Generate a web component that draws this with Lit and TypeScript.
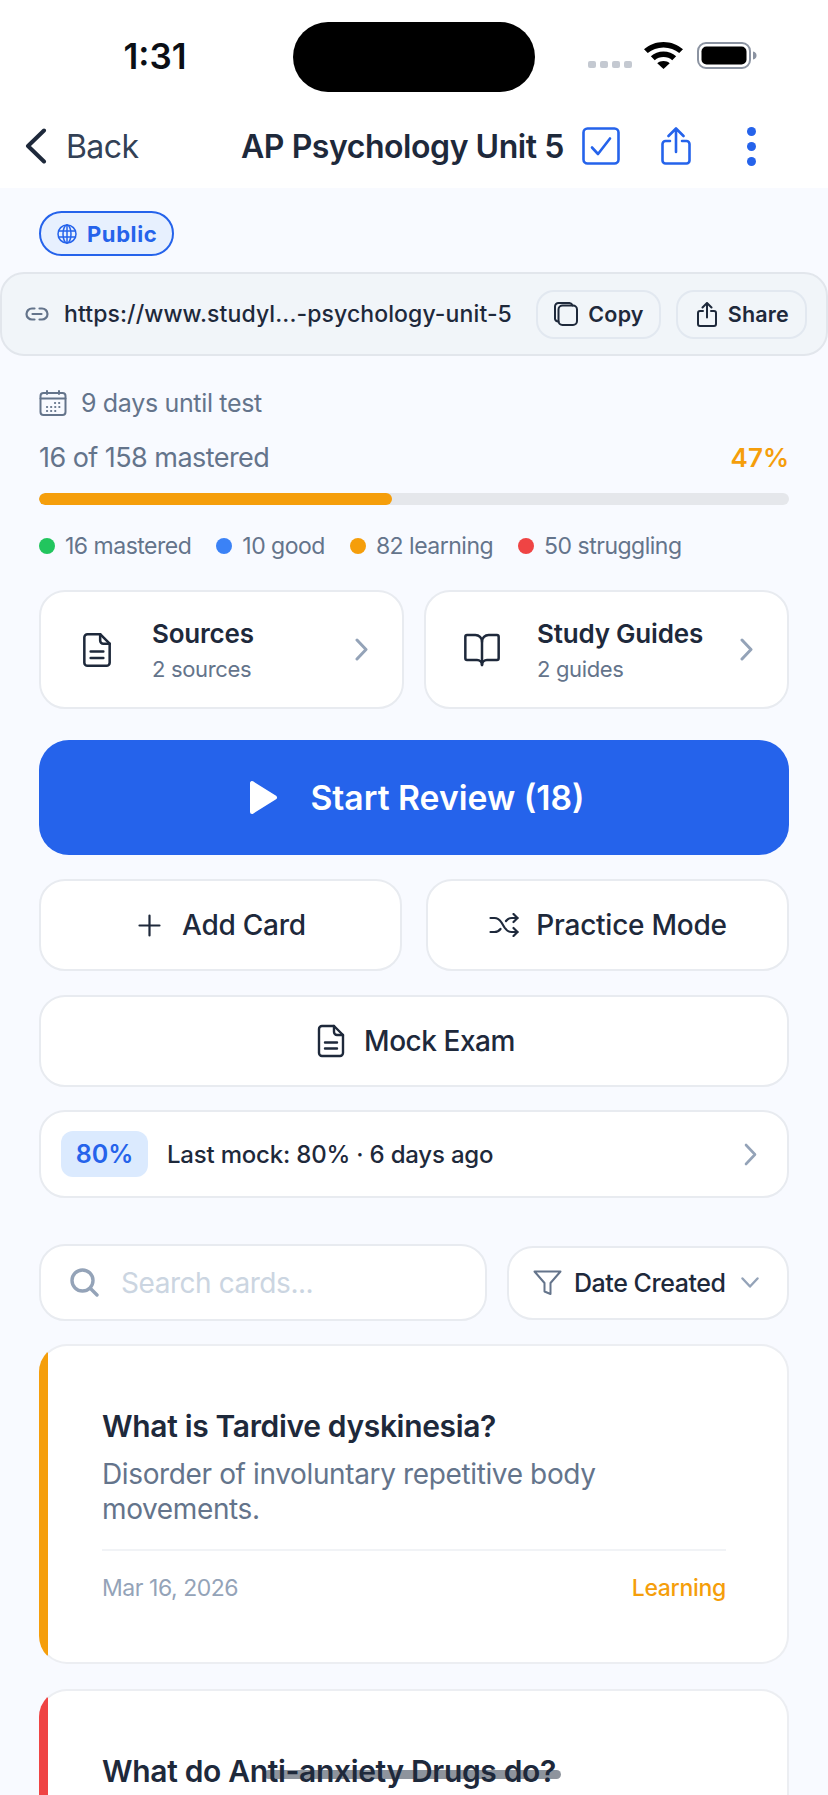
import { LitElement, css, html, svg } from "lit";
import { customElement } from "lit/decorators.js";

const docIcon = svg`<path d="M14 2H6a2 2 0 0 0-2 2v16a2 2 0 0 0 2 2h12a2 2 0 0 0 2-2V8z" /><path d="M14 2v4a2 2 0 0 0 2 2h4" /><path d="M8 13h8M8 17h8" />`;
const chevronRight = svg`<path d="M2 2l9 9.5L2 21" />`;

const legend = [
  { color: "#22c55e", label: "16 mastered" },
  { color: "#3b82f6", label: "10 good" },
  { color: "#f59e0b", label: "82 learning" },
  { color: "#ef4444", label: "50 struggling" },
];

@customElement("app-root")
export class AppRoot extends LitElement {
  static styles = css`
    :host {
      display: block;
      position: relative;
      width: 828px;
      height: 1795px;
      overflow: hidden;
      background: #f8faff;
      color: #1e293b;
      font-family: Inter, "Liberation Sans", sans-serif;
    }
    svg {
      display: block;
      flex: none;
      fill: none;
      stroke: currentColor;
      stroke-linecap: round;
      stroke-linejoin: round;
    }
    .top {
      background: #fff;
      height: 188px;
    }
    .status {
      display: flex;
      height: 104px;
      box-sizing: border-box;
      padding-top: 22px;
    }
    .status-left {
      width: 293px;
      height: 68px;
      display: flex;
      align-items: center;
      justify-content: center;
      padding-left: 17px;
      box-sizing: border-box;
      font-size: 35px;
      font-weight: 600;
      color: #0b0f16;
    }
    .island {
      width: 242px;
      height: 70px;
      border-radius: 35px;
      background: #000;
    }
    .status-right {
      display: flex;
      align-items: flex-start;
      margin-left: 53px;
      padding-top: 20px;
    }
    .signal {
      display: flex;
      gap: 4px;
      margin-top: 19px;
      margin-right: 12px;
    }
    .signal i {
      width: 8px;
      height: 7px;
      border-radius: 2px;
      background: #c4c9d1;
    }
    .battery {
      margin-left: 14px;
    }
    .nav {
      display: flex;
      align-items: center;
      height: 84px;
      padding-left: 25px;
    }
    .back {
      display: flex;
      align-items: center;
      gap: 19px;
      width: 216px;
      font-size: 32px;
      letter-spacing: -0.6px;
      color: #334155;
    }
    .title {
      font-size: 32px;
      font-weight: 600;
      letter-spacing: -0.45px;
      width: 341px;
      white-space: nowrap;
    }
    .nav-actions {
      display: flex;
      align-items: center;
      color: #2563eb;
    }
    .nav-share {
      margin-left: 41px;
    }
    .nav-dots {
      margin-left: 56px;
      display: flex;
      flex-direction: column;
      gap: 6px;
    }
    .nav-dots i {
      width: 9px;
      height: 9px;
      border-radius: 50%;
      background: #2563eb;
    }
    .content {
      padding: 23px 39px 0;
    }
    .pill {
      display: inline-flex;
      align-items: center;
      gap: 10px;
      height: 45px;
      box-sizing: border-box;
      padding: 0 15px 0 16px;
      border: 2px solid #2563eb;
      border-radius: 23px;
      background: #e7f0fe;
      color: #2563eb;
      font-size: 22px;
      font-weight: 700;
      letter-spacing: 0.6px;
      vertical-align: top;
    }
    .url-bar {
      display: flex;
      align-items: center;
      margin: 16px -39px 0;
      height: 84px;
      box-sizing: border-box;
      padding: 0 19px 0 23px;
      border: 2px solid #e2e6ec;
      border-radius: 24px;
      background: #f1f5f9;
    }
    .url-icon {
      color: #64748b;
    }
    .url-text {
      flex: 1;
      margin-left: 15px;
      font-size: 23px;
      font-weight: 500;
      letter-spacing: 0.1px;
      white-space: nowrap;
    }
    .mini-btn {
      display: flex;
      align-items: center;
      gap: 10px;
      height: 49px;
      box-sizing: border-box;
      padding: 0 15px 0 16px;
      border: 2px solid #e2e8f0;
      border-radius: 18px;
      font-size: 21.5px;
      font-weight: 600;
      letter-spacing: 0.2px;
    }
    .mini-btn + .mini-btn {
      margin-left: 15px;
      padding: 0 16px 0 19px;
      gap: 11px;
    }
    .countdown {
      display: flex;
      align-items: center;
      gap: 14px;
      height: 30px;
      margin-top: 32px;
      font-size: 25px;
      letter-spacing: -0.33px;
      color: #64748b;
    }
    .progress-head {
      display: flex;
      justify-content: space-between;
      align-items: center;
      height: 36px;
      margin-top: 21px;
      font-size: 27px;
      letter-spacing: -0.55px;
      color: #64748b;
    }
    .percent {
      color: #f59e0b;
      font-weight: 600;
      font-size: 26px;
      letter-spacing: 0;
    }
    .track {
      height: 12px;
      margin-top: 18px;
      border-radius: 6px;
      background: #e5e7eb;
      overflow: hidden;
    }
    .fill {
      height: 100%;
      border-radius: 6px;
      background: #f59e0b;
    }
    .legend {
      display: flex;
      gap: 25px;
      align-items: center;
      height: 30px;
      margin-top: 26px;
      font-size: 23px;
      letter-spacing: -0.5px;
      color: #64748b;
    }
    .legend-item {
      display: flex;
      align-items: center;
      gap: 10px;
    }
    .dot {
      width: 16px;
      height: 16px;
      border-radius: 50%;
    }
    .box {
      box-sizing: border-box;
      border: 2px solid #e8ebf0;
      border-radius: 26px;
      background: #fff;
    }
    .links {
      display: grid;
      grid-template-columns: 1fr 1fr;
      gap: 20px;
      margin-top: 29px;
    }
    .link-card {
      display: flex;
      align-items: center;
      height: 119px;
      padding: 0 34px 0 37px;
    }
    .link-card.guides {
      padding-left: 36px;
    }
    .link-text {
      flex: 1;
      margin-left: 36px;
    }
    .guides .link-text {
      margin-left: 35px;
    }
    .link-title {
      font-size: 26px;
      font-weight: 600;
      letter-spacing: -0.2px;
      line-height: 36px;
      margin-top: 1px;
    }
    .link-sub {
      font-size: 22px;
      letter-spacing: -0.35px;
      line-height: 32px;
      margin-top: 1px;
      color: #64748b;
    }
    .chev {
      color: #94a3b8;
    }
    .start {
      display: flex;
      align-items: center;
      justify-content: center;
      gap: 32px;
      height: 115px;
      margin-top: 31px;
      padding-left: 6px;
      border-radius: 30px;
      background: #2563eb;
      color: #fff;
      font-size: 33.7px;
      font-weight: 600;
    }
    .actions {
      display: grid;
      grid-template-columns: 1fr 1fr;
      gap: 24px;
      margin-top: 24px;
    }
    .action {
      display: flex;
      align-items: center;
      justify-content: center;
      gap: 21px;
      height: 92px;
      padding-left: 3px;
      font-size: 28px;
      font-weight: 500;
      letter-spacing: -0.25px;
    }
    .action.practice {
      gap: 17px;
      padding-left: 1px;
    }
    .mock {
      gap: 15px;
      margin-top: 24px;
      padding-left: 0;
      letter-spacing: -0.45px;
    }
    .last-mock {
      display: flex;
      align-items: center;
      height: 88px;
      margin-top: 23px;
      padding: 0 30px 0 20px;
      font-size: 24px;
      letter-spacing: -0.2px;
      font-weight: 500;
    }
    .last-score {
      display: flex;
      align-items: center;
      justify-content: center;
      width: 87px;
      height: 46px;
      border-radius: 12px;
      background: #dbeafe;
      color: #2563eb;
      font-size: 25px;
      letter-spacing: 0;
      font-weight: 600;
    }
    .last-text {
      flex: 1;
      margin-left: 19px;
    }
    .filters {
      display: flex;
      align-items: center;
      gap: 20px;
      margin-top: 46px;
    }
    .search {
      display: flex;
      align-items: center;
      gap: 22px;
      width: 448px;
      height: 77px;
      box-sizing: border-box;
      padding-left: 29px;
      font-size: 28px;
      letter-spacing: -0.45px;
      color: #cbd5e1;
    }
    .search svg {
      color: #94a3b8;
    }
    .sort {
      display: flex;
      align-items: center;
      flex: 1;
      height: 74px;
      box-sizing: border-box;
      padding: 0 28px 0 24px;
      font-size: 25px;
      letter-spacing: -0.45px;
      font-weight: 500;
    }
    .sort .sort-label {
      flex: 1;
      margin-left: 12px;
    }
    .sort svg {
      color: #64748b;
    }
    .sort svg.sort-chev {
      color: #94a3b8;
    }
    .card {
      --accent: #f59e0b;
      box-sizing: border-box;
      height: 320px;
      margin-top: 25px;
      padding: 60px 61px 0 61px;
      border: 2px solid #eceef2;
      border-left-color: transparent;
      border-radius: 28px;
      background: linear-gradient(90deg, var(--accent) 9px, #fff 9px) border-box;
    }
    .filters + .card {
      margin-top: 23px;
    }
    .card.red {
      --accent: #ef4444;
    }
    .card-title {
      font-size: 30px;
      font-weight: 600;
      letter-spacing: -0.34px;
      line-height: 40px;
    }
    .card-text {
      margin-top: 11px;
      font-size: 28px;
      letter-spacing: -0.37px;
      line-height: 35px;
      color: #64748b;
    }
    .card-foot {
      display: flex;
      justify-content: space-between;
      align-items: center;
      margin-top: 22px;
      padding-top: 19px;
      border-top: 2px solid #f1f3f6;
      font-size: 23px;
      letter-spacing: -0.45px;
      line-height: 36px;
      color: #94a3b8;
    }
    .card-level {
      color: #f59e0b;
      font-weight: 500;
      letter-spacing: -0.3px;
    }
    .home {
      position: absolute;
      left: 264px;
      top: 1770px;
      width: 297px;
      height: 9px;
      border-radius: 5px;
      background: rgba(30, 41, 59, 0.5);
    }
  `;

  render() {
    return html`
      <div class="top">
        <div class="status">
          <div class="status-left">1:31</div>
          <div class="island"></div>
          <div class="status-right">
            <div class="signal"><i></i><i></i><i></i><i></i></div>
            <svg width="39" height="27" viewBox="0 0 37 27" preserveAspectRatio="none" style="stroke:none">
              <path fill="#000" d="M18.5 0C11.4 0 5 2.8 0 7.2l3.6 3.9C7.6 7.6 12.8 5.4 18.5 5.4s10.900 2.200 14.900 5.700L37 7.200C32 2.800 25.600 0 18.500 0z" />
              <path fill="#000" d="M18.500 9.600c-4.600 0-8.800 1.800-12 4.700l3.700 3.900c2.200-2 5.100-3.200 8.300-3.200s6.100 1.200 8.300 3.200l3.700-3.900c-3.200-2.900-7.400-4.700-12-4.700z" />
              <path fill="#000" d="M18.500 19c-2.300 0-4.400.9-5.900 2.300l5.900 5.700 5.900-5.700c-1.500-1.400-3.600-2.300-5.900-2.300z" />
            </svg>
            <svg class="battery" width="60" height="27" viewBox="0 0 60 27" style="stroke:none">
              <rect x="1" y="1" width="52" height="25" rx="8" fill="none" stroke="#8b93a1" stroke-width="2" />
              <rect x="4.500" y="4.500" width="45" height="18" rx="5" fill="#000" />
              <path d="M56 9.500c2.500.5 3.500 2 3.500 4s-1 3.500-3.500 4z" fill="#8b93a1" />
            </svg>
          </div>
        </div>
        <div class="nav">
          <div class="back">
            <svg width="22" height="36" viewBox="0 0 22 36" stroke-width="4" style="color:#1e293b"><path d="M19 2.500L3 18l16 15.500" /></svg>
            Back
          </div>
          <div class="title">AP Psychology Unit 5</div>
          <div class="nav-actions">
            <svg width="38" height="38" viewBox="0 0 38 38" stroke-width="2.600">
              <rect x="1.500" y="1.500" width="35" height="35" rx="4" />
              <path d="M10 20.500l6 6.500 12-15.500" />
            </svg>
            <svg class="nav-share" width="30" height="38" viewBox="0 0 30 38" stroke-width="2.600">
              <path d="M15 25V2M7.500 9L15 1.500 22.500 9" />
              <path d="M9 14H4.500A3 3 0 0 0 1.500 17v16.500a3 3 0 0 0 3 3h21a3 3 0 0 0 3-3V17a3 3 0 0 0-3-3H21" />
            </svg>
            <div class="nav-dots"><i></i><i></i><i></i></div>
          </div>
        </div>
      </div>

      <div class="content">
        <div class="pill">
          <svg width="20" height="20" viewBox="0 0 20 20" stroke-width="1.500">
            <circle cx="10" cy="10" r="9" />
            <ellipse cx="10" cy="10" rx="4" ry="9" />
            <path d="M1.500 7h17M1.500 13h17M10 1v18" />
          </svg>
          Public
        </div>

        <div class="url-bar">
          <svg class="url-icon" width="24" height="14" viewBox="0 0 24 14" stroke-width="2.200">
            <path d="M9.500 1.500H7a5.500 5.500 0 0 0 0 11h2.500M14.500 1.500H17a5.500 5.500 0 0 1 0 11h-2.500M7.500 7h9" />
          </svg>
          <div class="url-text">https://www.studyl...-psychology-unit-5</div>
          <div class="mini-btn">
            <svg width="24" height="24" viewBox="0 0 24 24" stroke-width="2">
              <rect x="4.500" y="3.500" width="18.500" height="19.500" rx="4" />
              <path d="M4.500 19.500A3.500 3.500 0 0 1 1 17V4.500A3.500 3.500 0 0 1 4.500 1h11a3.500 3.500 0 0 1 3 2.500" />
            </svg>
            Copy
          </div>
          <div class="mini-btn">
            <svg width="20" height="25" viewBox="0 0 20 25" stroke-width="2">
              <path d="M10 15.500V1.500M5.500 5.500L10 1l4.500 4.500" />
              <path d="M6 9H3a2 2 0 0 0-2 2v11a2 2 0 0 0 2 2h14a2 2 0 0 0 2-2V11a2 2 0 0 0-2-2h-3" />
            </svg>
            Share
          </div>
        </div>

        <div class="countdown">
          <svg width="28" height="26" viewBox="0 0 28 26" stroke-width="2">
            <rect x="1.500" y="3" width="25" height="22" rx="3" />
            <path d="M1.500 8.500h25M8 1v3M20 1v3" />
            <path stroke-width="2.200" stroke-dasharray="0.100 4" d="M16 13h8M8 17h16M8 21h12" />
          </svg>
          9 days until test
        </div>

        <div class="progress-head">
          <span>16 of 158 mastered</span>
          <span class="percent">47%</span>
        </div>
        <div class="track"><div class="fill" style="width:47%"></div></div>

        <div class="legend">
          ${legend.map(
            (item) => html`
              <div class="legend-item">
                <span class="dot" style="background:${item.color}"></span>
                ${item.label}
              </div>
            `,
          )}
        </div>

        <div class="links">
          <div class="box link-card">
            <svg width="38" height="38" viewBox="0 0 24 24" stroke-width="1.600">${docIcon}</svg>
            <div class="link-text">
              <div class="link-title">Sources</div>
              <div class="link-sub">2 sources</div>
            </div>
            <svg class="chev" width="13" height="23" viewBox="0 0 13 23" stroke-width="3">${chevronRight}</svg>
          </div>
          <div class="box link-card guides">
            <svg width="40" height="40" viewBox="0 0 24 24" stroke-width="1.500">
              <path d="M12 7v14" />
              <path d="M3 18a1 1 0 0 1-1-1V4a1 1 0 0 1 1-1h5a4 4 0 0 1 4 4 4 4 0 0 1 4-4h5a1 1 0 0 1 1 1v13a1 1 0 0 1-1 1h-6a3 3 0 0 0-3 3 3 3 0 0 0-3-3z" />
            </svg>
            <div class="link-text">
              <div class="link-title">Study Guides</div>
              <div class="link-sub">2 guides</div>
            </div>
            <svg class="chev" width="13" height="23" viewBox="0 0 13 23" stroke-width="3">${chevronRight}</svg>
          </div>
        </div>

        <div class="start">
          <svg width="29" height="35" viewBox="0 0 29 35" stroke-width="4" style="fill:#fff">
            <path d="M3 3v29l23-14.500z" />
          </svg>
          Start Review (18)
        </div>

        <div class="actions">
          <div class="box action">
            <svg width="23" height="23" viewBox="0 0 23 23" stroke-width="2.200"><path d="M11.500 1.500v20M1.500 11.500h20" /></svg>
            Add Card
          </div>
          <div class="box action practice">
            <svg width="30" height="24" viewBox="0 0 30 24" stroke-width="2.200">
              <path d="M1.500 5h4c3 0 5 1.500 7 4.500l3 5c2 3 4 4.500 7 4.500h6" />
              <path d="M1.500 19h4c2.500 0 4.500-1 6-3M17 8c1.500-2 3.500-3 6-3h5.500" />
              <path d="M24.500 1l4 4-4 4M24.500 15l4 4-4 4" />
            </svg>
            Practice Mode
          </div>
        </div>

        <div class="box action mock">
          <svg width="36" height="36" viewBox="0 0 24 24" stroke-width="1.600">${docIcon}</svg>
          Mock Exam
        </div>

        <div class="box last-mock">
          <div class="last-score">80%</div>
          <div class="last-text">Last mock: 80% · 6 days ago</div>
          <svg class="chev" width="13" height="23" viewBox="0 0 13 23" stroke-width="2.600">${chevronRight}</svg>
        </div>

        <div class="filters">
          <div class="box search">
            <svg width="29" height="29" viewBox="0 0 29 29" stroke-width="3.400">
              <circle cx="12.500" cy="12.500" r="10.500" />
              <path d="M20.500 20.500l6.500 6.500" />
            </svg>
            Search cards...
          </div>
          <div class="box sort">
            <svg width="29" height="26" viewBox="0 0 29 26" stroke-width="2">
              <path d="M1.500 1.500h26L17.500 13v11l-6-2.500V13z" />
            </svg>
            <span class="sort-label">Date Created</span>
            <svg class="sort-chev" width="18" height="11" viewBox="0 0 18 11" stroke-width="2.400"><path d="M1.500 1.500L9 9.500l7.500-8" /></svg>
          </div>
        </div>

        <div class="card">
          <div class="card-title">What is Tardive dyskinesia?</div>
          <div class="card-text">Disorder of involuntary repetitive body movements.</div>
          <div class="card-foot">
            <span>Mar 16, 2026</span>
            <span class="card-level">Learning</span>
          </div>
        </div>

        <div class="card red">
          <div class="card-title">What do Anti-anxiety Drugs do?</div>
        </div>
      </div>

      <div class="home"></div>
    `;
  }
}
